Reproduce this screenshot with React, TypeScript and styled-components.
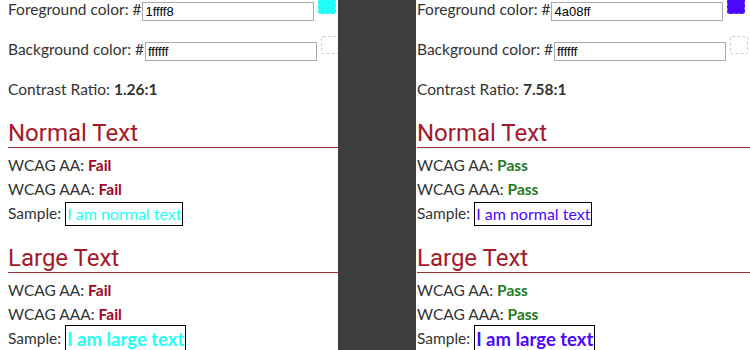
import styled, { createGlobalStyle } from 'styled-components';

const GlobalStyle = createGlobalStyle`
	body {
		margin: 0;
		background: #fff;
		overflow: hidden;
		font-family: Lato, 'Open Sans', sans-serif;
		color: #333;
	}
`;

const Page = styled.div`
	display: flex;
	padding-left: 8px;
	height: 360px;
	margin-top: -4px;
`;

const Panel = styled.section`
	flex: 0 0 330px;
	min-width: 0;
	&:last-child {
		flex: 1 1 auto;
		padding-left: 1px;
	}
`;

const Divider = styled.div`
	flex: 0 0 78px;
	background: #3d3d3f;
`;

const ColorRow = styled.div`
	display: flex;
	align-items: flex-start;
	height: 40px;
`;

const Label = styled.label`
	font-size: 15.5px;
	line-height: 18px;
	margin-top: 4px;
	white-space: nowrap;
`;

const HexInput = styled.input`
	flex: 0 0 172px;
	width: 172px;
	height: 19px;
	box-sizing: border-box;
	margin: 6px 0 0 1px;
	padding: 1px 2px;
	border: 1px solid #a9a9a9;
	font-family: 'Liberation Sans', Arial, sans-serif;
	font-size: 13px;
	color: #000;
	outline: none;
`;

const Swatch = styled.div<{ $color: string }>`
	flex: 0 0 18px;
	height: 18px;
	box-sizing: border-box;
	margin-left: 4px;
	background: ${p => p.$color};
	border: 1px dashed ${p => (p.$color === '#ffffff' ? '#cfcfcf' : 'rgba(255,255,255,0.35)')};
	border-radius: 2px;
`;

const Ratio = styled.div`
	font-size: 15.5px;
	line-height: 24px;
	margin-top: 1px;
`;

const Heading = styled.h2`
	margin: 18px 0 0;
	font-family: Roboto, sans-serif;
	font-weight: 400;
	font-size: 24px;
	line-height: 28px;
	color: #a3192b;
	border-bottom: 1px solid #9b2d37;
`;

const Line = styled.div`
	font-size: 15.5px;
	line-height: 24px;
	white-space: nowrap;
	h2 + & {
		margin-top: 5px;
	}
`;

const Verdict = styled.b<{ $pass: boolean }>`
	color: ${p => (p.$pass ? '#1f7a1f' : '#a0061f')};
`;

const Sample = styled.span<{ $color: string; $large?: boolean }>`
	display: inline-block;
	vertical-align: top;
	margin-top: ${p => (p.$large ? '-1px' : '1px')};
	border: 1px solid #000;
	padding: 0 1px;
	line-height: ${p => (p.$large ? '26px' : '22px')};
	font-size: ${p => (p.$large ? '18.5px' : '16px')};
	font-weight: ${p => (p.$large ? 700 : 400)};
	color: ${p => p.$color};
`;

type Check = { fg: string; ratio: string; pass: boolean };

function Result({ fg, ratio, pass }: Check) {
	const word = pass ? 'Pass' : 'Fail';
	return (
		<Panel>
			<ColorRow>
				<Label>Foreground color: #</Label>
				<HexInput defaultValue={fg} />
				<Swatch $color={'#' + fg} />
			</ColorRow>
			<ColorRow>
				<Label>Background color: #</Label>
				<HexInput defaultValue="ffffff" />
				<Swatch $color="#ffffff" />
			</ColorRow>
			<Ratio>
				Contrast Ratio: <b>{ratio}</b>
			</Ratio>
			<Heading>Normal Text</Heading>
			<Line>
				WCAG AA: <Verdict $pass={pass}>{word}</Verdict>
			</Line>
			<Line>
				WCAG AAA: <Verdict $pass={pass}>{word}</Verdict>
			</Line>
			<Line>
				Sample: <Sample $color={'#' + fg}>I am normal text</Sample>
			</Line>
			<Heading>Large Text</Heading>
			<Line>
				WCAG AA: <Verdict $pass={pass}>{word}</Verdict>
			</Line>
			<Line>
				WCAG AAA: <Verdict $pass={pass}>{word}</Verdict>
			</Line>
			<Line>
				Sample: <Sample $color={'#' + fg} $large>I am large text</Sample>
			</Line>
		</Panel>
	);
}

export default function App() {
	return (
		<>
			<GlobalStyle />
			<Page>
				<Result fg="1ffff8" ratio="1.26:1" pass={false} />
				<Divider />
				<Result fg="4a08ff" ratio="7.58:1" pass />
			</Page>
		</>
	);
}
